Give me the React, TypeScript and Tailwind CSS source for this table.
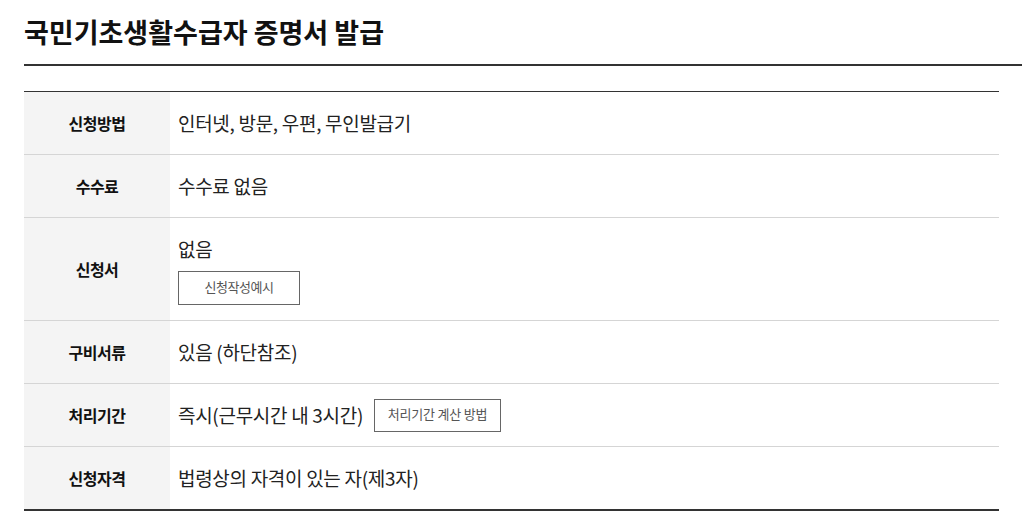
import React from "react";

const font = { fontFamily: '"Noto Sans CJK KR", "Noto Sans", sans-serif' };

function Row({ label, children, tall }: { label: string; children: React.ReactNode; tall?: boolean }) {
  return (
    <div className="flex border-b border-[#d5d5d5] last:border-b-0">
      <div className="w-[146px] shrink-0 bg-[#f4f4f4] flex items-center justify-center text-[16px] font-bold text-[#111] tracking-[-0.5px]">
        {label}
      </div>
      <div
        className={`flex-1 flex ${
          tall ? "flex-col justify-start items-start pt-[19px] pb-[15px]" : "items-center h-[62px]"
        } px-[8px] text-[19px] text-[#222] tracking-[-0.3px]`}
      >
        {children}
      </div>
    </div>
  );
}

export default function App() {
  return (
    <div className="bg-white w-[1022px] h-[518px] overflow-hidden" style={font}>
      <div className="pl-[24px]">
        <h1 className="pt-[12px] h-[64px] text-[27px] font-bold text-[#111] leading-[40px]">
          국민기초생활수급자 증명서 발급
        </h1>
        <div className="h-[2px] bg-[#333]" />
        <div className="mt-[25px] mr-[23px] border-t border-b-2 border-t-[#333] border-b-[#333]">
          <Row label="신청방법">인터넷, 방문, 우편, 무인발급기</Row>
          <Row label="수수료">수수료 없음</Row>
          <Row label="신청서" tall>
            <div className="leading-[24px]">없음</div>
            <button className="mt-[10px] w-[122px] h-[34px] border border-[#666] text-[13px] text-[#555] tracking-[-0.5px] leading-none pb-[4px]">
              신청작성예시
            </button>
          </Row>
          <Row label="구비서류">있음 (하단참조)</Row>
          <Row label="처리기간">
            <span>즉시(근무시간 내 3시간)</span>
            <button className="ml-[11px] w-[127px] h-[33px] border border-[#666] text-[13px] text-[#555] tracking-[-0.2px] leading-none pb-[3px]">
              처리기간 계산 방법
            </button>
          </Row>
          <Row label="신청자격">법령상의 자격이 있는 자(제3자)</Row>
        </div>
      </div>
    </div>
  );
}
